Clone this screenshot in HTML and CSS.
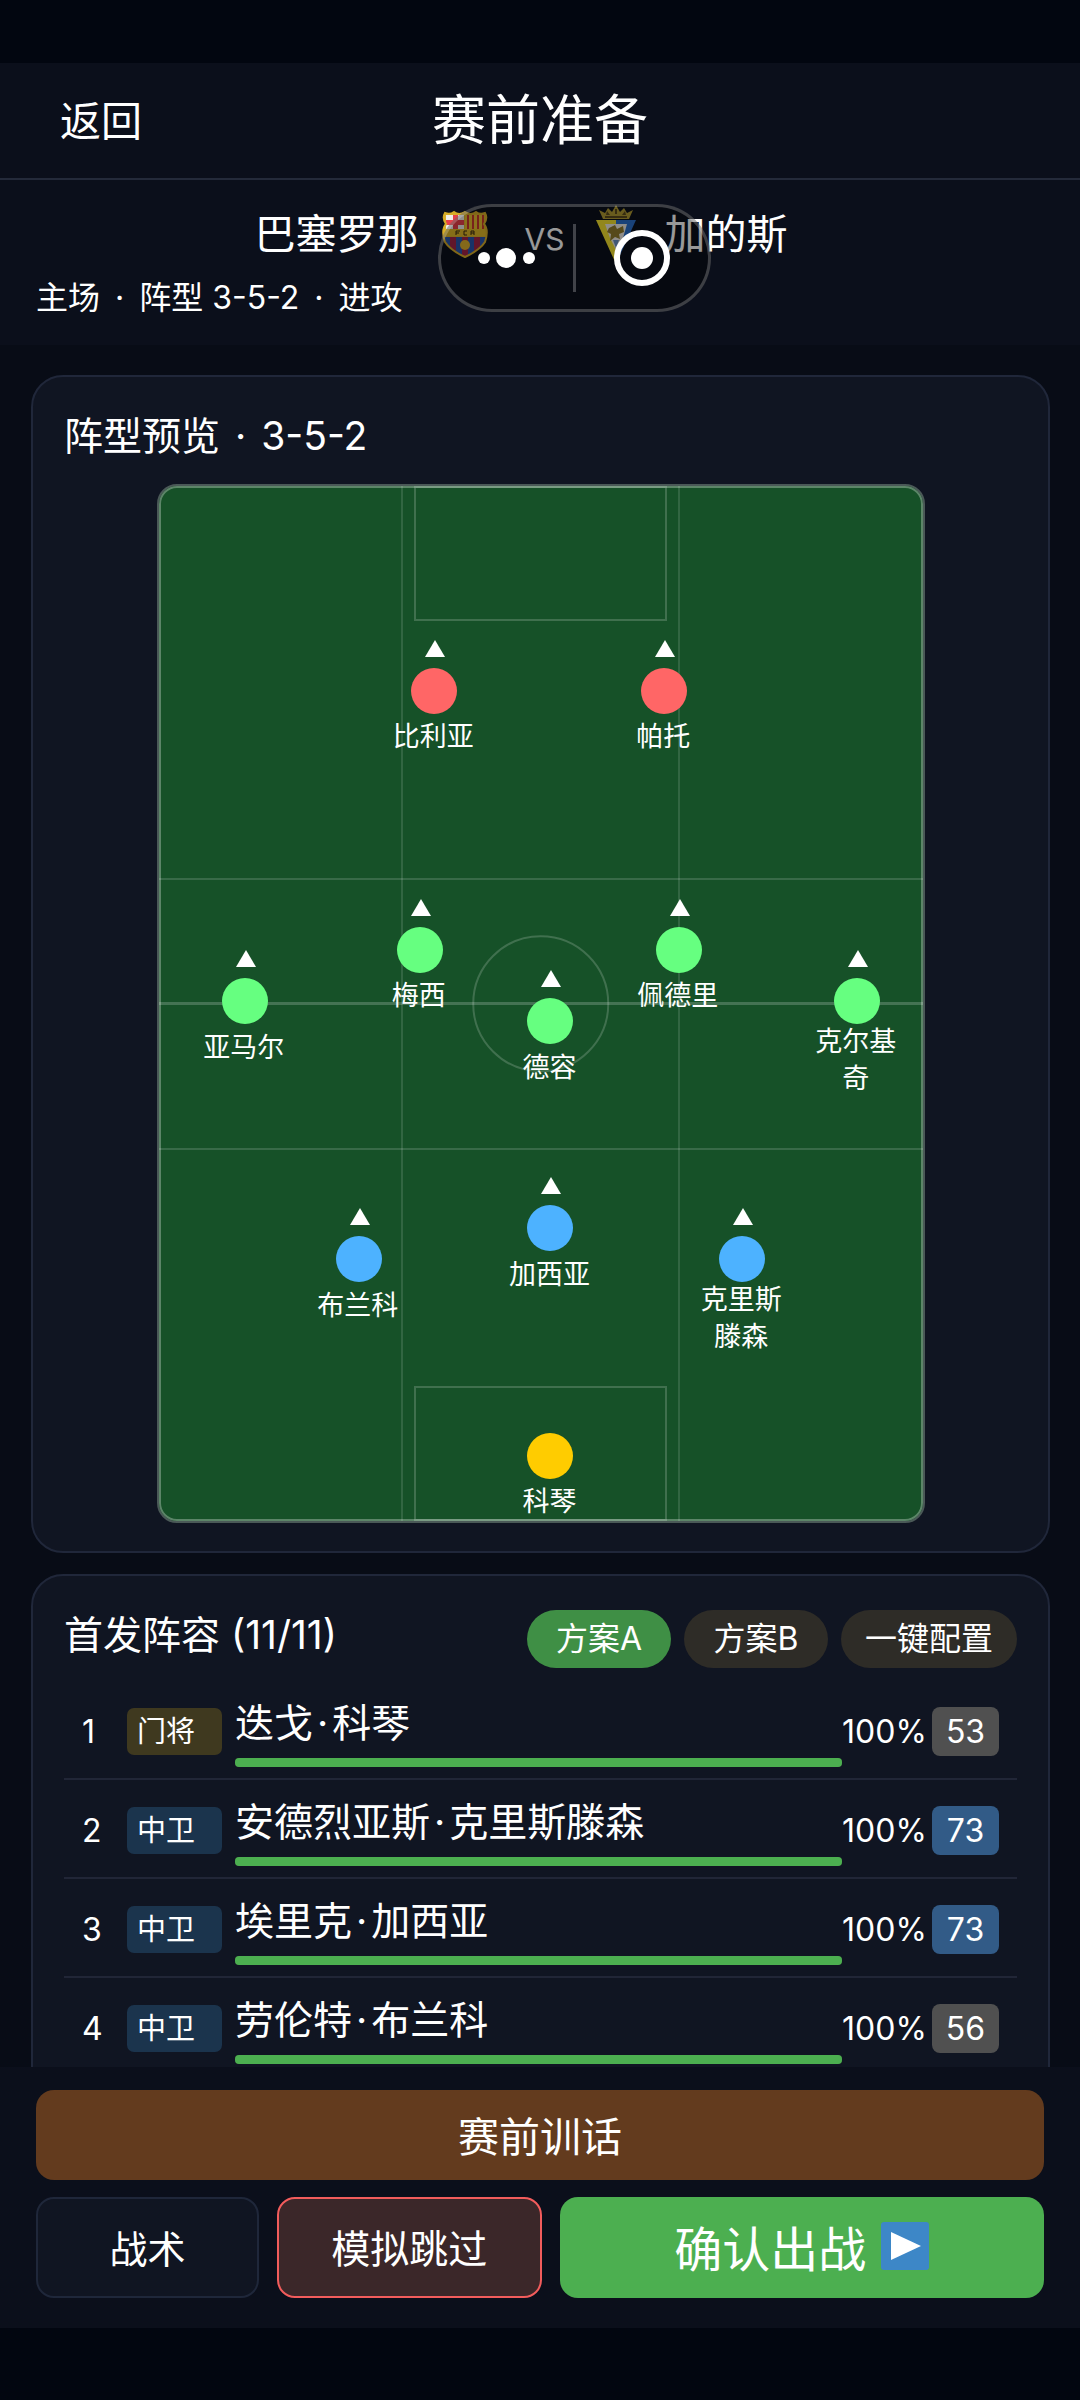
FILE: index.html
```html
<!DOCTYPE html>
<html lang="zh-CN">
<head>
<meta charset="utf-8">
<meta name="viewport" content="width=device-width, initial-scale=1">
<title>赛前准备</title>
<link rel="stylesheet" href="styles.css">
</head>
<body>
<div class="app">
  <header class="topbar">
    <button class="back" type="button">返回</button>
    <h1 class="page-title">赛前准备</h1>
  </header>

  <div class="capsule">
    <button class="capsule-btn" type="button" aria-label="更多">
      <svg width="60" height="24" viewBox="0 0 60 24" fill="#fff"><circle cx="7" cy="12" r="6"/><circle cx="29" cy="12" r="10"/><circle cx="52" cy="12" r="6"/></svg>
    </button>
    <span class="capsule-line"></span>
    <button class="capsule-btn" type="button" aria-label="关闭">
      <svg width="56" height="56" viewBox="0 0 56 56"><circle cx="28" cy="28" r="25" fill="none" stroke="#fff" stroke-width="6"/><circle cx="28" cy="28" r="11" fill="#fff"/></svg>
    </button>
  </div>

  <section class="match">
    <div class="teams">
      <span class="team">巴塞罗那</span>
      <svg class="crest crest-home" width="48" height="48" viewBox="0 0 48 48">
        <defs><clipPath id="shield"><path d="M4 3Q9 5 13 2Q18 6 24 2Q30 6 35 2Q39 5 44 3Q47 8 43 14Q48 20 44 32Q39 40 24 47Q9 40 4 32Q0 20 5 14Q1 8 4 3Z"/></clipPath></defs>
        <g clip-path="url(#shield)">
          <path fill="#d9b02a" d="M0 0h48v48H0z"/>
          <path fill="#f1eee9" d="M5 5h18v14H5z"/>
          <path fill="#e8404a" d="M12 5h5v14h-5zM5 10h18v5H5z"/>
          <path fill="#e8bd30" d="M24 5h19v14H24z"/>
          <path fill="#c8372d" d="M26 5h2v14h-2zM31 5h2v14h-2zM36 5h2v14h-2zM41 5h2v14h-2z"/>
          <path fill="#dfb728" d="M0 19h48v7H0z"/>
          <path fill="#2a55ac" d="M3 27h42v20H3z"/>
          <path fill="#a32549" d="M9 27h6v20H9zM21 27h6v20h-6zM33 27h6v20h-6z"/>
          <circle cx="24" cy="35" r="5" fill="#dbb02c"/>
          <path fill="none" stroke="#3a2b12" stroke-width="1" d="M15 21h4M15 21v4M15 23h3M26 21h-3v4h3M30 25v-4h3v4M30 23h3"/>
        </g>
        <path fill="none" stroke="#d6ac28" stroke-width="2" d="M4 3Q9 5 13 2Q18 6 24 2Q30 6 35 2Q39 5 44 3Q47 8 43 14Q48 20 44 32Q39 40 24 47Q9 40 4 32Q0 20 5 14Q1 8 4 3Z"/>
      </svg>
      <span class="versus">VS</span>
      <svg class="crest crest-away" width="48" height="60" viewBox="0 0 48 60">
        <path fill="#f4e22f" d="M4 16h20v44z"/>
        <path fill="#2a6fca" d="M24 16h20L24 60z"/>
        <path fill="#eeebe4" d="M13 20h22l-4 14-7 12-6-12z"/>
        <path fill="#8f7a2c" d="M17 24l6-3 2 4 6-3 1 6-5 2 1 5-5-2-5 4 1-7-4-2z"/>
        <path fill="#6d91c4" d="M21 36h6l-3 8z"/>
        <path fill="#b09a32" d="M11 15L7 6l6 3 3-5 4 4 4-7 4 7 4-4 3 5 6-3-4 9z"/>
        <path fill="#5b4a1d" d="M13 12h22v2H13zM15 7l3 4h-4zM23 5h2v5h-2zM33 7l1 4h-4z"/>
      </svg>
      <span class="team">加的斯</span>
    </div>
    <p class="match-meta">主场 <span class="sep">·</span> 阵型 3-5-2 <span class="sep">·</span> 进攻</p>
  </section>

  <main class="content">
    <section class="card card-pitch">
      <h2 class="card-title">阵型预览 <span class="dot">·</span> 3-5-2</h2>
      <div class="pitch">
        <span class="line line-v line-left"></span>
        <span class="line line-v line-right"></span>
        <span class="line line-h line-upper"></span>
        <span class="line line-h line-lower"></span>
        <span class="line line-half"></span>
        <span class="center-circle"></span>
        <span class="box box-top"></span>
        <span class="box box-bottom"></span>
        <div class="player forward" style="left:36.1%;top:19.8%"><span class="name">比利亚</span></div>
        <div class="player forward" style="left:66.2%;top:19.8%"><span class="name">帕托</span></div>
        <div class="player midfield" style="left:34.2%;top:44.8%"><span class="name">梅西</span></div>
        <div class="player midfield" style="left:68.1%;top:44.8%"><span class="name">佩德里</span></div>
        <div class="player midfield" style="left:51.3%;top:51.7%"><span class="name">德容</span></div>
        <div class="player midfield" style="left:11.3%;top:49.8%"><span class="name">亚马尔</span></div>
        <div class="player midfield" style="left:91.4%;top:49.8%"><span class="name">克尔基奇</span></div>
        <div class="player defender" style="left:26.2%;top:74.7%"><span class="name">布兰科</span></div>
        <div class="player defender" style="left:51.3%;top:71.7%"><span class="name">加西亚</span></div>
        <div class="player defender" style="left:76.4%;top:74.7%"><span class="name">克里斯滕森</span></div>
        <div class="player keeper" style="left:51.3%;top:93.7%"><span class="name">科琴</span></div>
      </div>
    </section>

    <section class="card">
      <div class="card-head">
        <h2 class="card-title">首发阵容 (11/11)</h2>
        <div class="plans">
          <button class="chip chip-active" type="button">方案A</button>
          <button class="chip" type="button">方案B</button>
          <button class="chip" type="button">一键配置</button>
        </div>
      </div>
      <ol class="lineup">
        <li class="row">
          <span class="num">1</span><span class="tag tag-gk">门将</span>
          <div class="who"><span class="who-name">迭戈<span class="dot">·</span>科琴</span><span class="bar"><span class="bar-fill" style="width:100%"></span></span></div>
          <span class="pct">100%</span><span class="score">53</span>
        </li>
        <li class="row">
          <span class="num">2</span><span class="tag">中卫</span>
          <div class="who"><span class="who-name">安德烈亚斯<span class="dot">·</span>克里斯滕森</span><span class="bar"><span class="bar-fill" style="width:100%"></span></span></div>
          <span class="pct">100%</span><span class="score score-good">73</span>
        </li>
        <li class="row">
          <span class="num">3</span><span class="tag">中卫</span>
          <div class="who"><span class="who-name">埃里克<span class="dot">·</span>加西亚</span><span class="bar"><span class="bar-fill" style="width:100%"></span></span></div>
          <span class="pct">100%</span><span class="score score-good">73</span>
        </li>
        <li class="row">
          <span class="num">4</span><span class="tag">中卫</span>
          <div class="who"><span class="who-name">劳伦特<span class="dot">·</span>布兰科</span><span class="bar"><span class="bar-fill" style="width:100%"></span></span></div>
          <span class="pct">100%</span><span class="score">56</span>
        </li>
      </ol>
    </section>
  </main>

  <footer class="actions">
    <button class="btn btn-talk" type="button">赛前训话</button>
    <div class="action-row">
      <button class="btn btn-tactics" type="button">战术</button>
      <button class="btn btn-skip" type="button">模拟跳过</button>
      <button class="btn btn-confirm" type="button">确认出战
        <svg width="48" height="48" viewBox="0 0 48 48"><rect width="48" height="48" rx="3" fill="#3d87c7"/><path fill="#fff" d="M10 10l30 14-30 14z"/></svg>
      </button>
    </div>
  </footer>
</div>
</body>
</html>
```
FILE: styles.css
```css
* {
  box-sizing: border-box;
}

body {
  margin: 0;
  background: #020610;
  color: #fff;
  font-family: Inter, "Noto Sans CJK SC", sans-serif;
  font-size: 32px;
}

h1,
h2,
p,
ol {
  margin: 0;
  padding: 0;
  font-weight: 400;
}

button {
  margin: 0;
  padding: 0;
  border: 0;
  background: none;
  color: inherit;
  font: inherit;
}

.app {
  position: relative;
  display: flex;
  flex-direction: column;
  height: 100vh;
  padding: 63px 0 72px;
}

.dot {
  margin: 0 4px;
}

.sep {
  margin: 0 6px;
}

/* Header */

.topbar {
  flex: none;
  display: grid;
  grid-template-columns: 1fr auto 1fr;
  align-items: center;
  height: 117px;
  padding: 0 60px;
  border-bottom: 2px solid #242a3a;
  background: #0b0f1b;
}

.back {
  justify-self: start;
  font-size: 41px;
  line-height: 60px;
}

.page-title {
  font-size: 54px;
  line-height: 80px;
}

.capsule {
  position: absolute;
  z-index: 2;
  top: 204px;
  left: 438px;
  display: flex;
  align-items: center;
  width: 273px;
  height: 108px;
  border: 3px solid rgba(255, 255, 255, 0.22);
  border-radius: 54px;
  background: rgba(0, 0, 0, 0.4);
}

.capsule-btn {
  flex: 1;
  display: flex;
  align-items: center;
  justify-content: center;
}

.capsule-line {
  width: 3px;
  height: 68px;
  background: rgba(255, 255, 255, 0.24);
}

/* Match summary */

.match {
  flex: none;
  padding: 30px 36px 29px;
  background: #0b0f1b;
}

.teams {
  display: flex;
  align-items: center;
  justify-content: center;
  height: 48px;
  padding-right: 38px;
}

.team {
  font-size: 41px;
  line-height: 48px;
}

.crest-home {
  margin: 0 36px 0 22px;
}

.crest-away {
  margin: 0 24px 0 28px;
}

.versus {
  align-self: flex-end;
  font-size: 30px;
  line-height: 38px;
}

.match-meta {
  margin-top: 22px;
  font-size: 32px;
  line-height: 36px;
}

/* Scroll area */

.content {
  flex: 1;
  display: flex;
  flex-direction: column;
  gap: 21px;
  min-height: 0;
  padding: 30px 30px 30px 31px;
  overflow-y: auto;
  scrollbar-width: none;
  background: #080c16;
}

.card {
  flex: none;
  padding: 34px 31px 28px;
  border: 2px solid #20273a;
  border-radius: 32px;
  background: #101522;
}

.card-title {
  font-size: 39px;
  line-height: 50px;
}

/* Pitch */

.pitch {
  position: relative;
  width: 100%;
  max-width: 768px;
  aspect-ratio: 768 / 1039;
  margin: 23px auto 0;
  border: 2px solid #4a5957;
  border-radius: 20px;
  background: #165128;
  box-shadow: inset 0 0 0 2px rgba(255, 255, 255, 0.3);
}

.line {
  position: absolute;
}

.line-v {
  top: 0;
  bottom: 0;
  width: 2px;
  background: rgba(255, 255, 255, 0.12);
}

.line-left {
  left: 31.8%;
}

.line-right {
  right: 31.8%;
}

.line-h {
  left: 0;
  right: 0;
  height: 2px;
  background: rgba(255, 255, 255, 0.15);
}

.line-upper {
  top: 37.9%;
}

.line-lower {
  top: 64%;
}

.line-half {
  left: 0;
  right: 0;
  top: calc(50% - 2px);
  height: 3px;
  background: rgba(255, 255, 255, 0.2);
}

.center-circle {
  position: absolute;
  top: 50%;
  left: 50%;
  width: 18%;
  aspect-ratio: 1;
  border: 2px solid rgba(255, 255, 255, 0.18);
  border-radius: 50%;
  transform: translate(-50%, -50%);
}

.box {
  position: absolute;
  left: 0;
  right: 0;
  width: 33%;
  height: 13%;
  margin: 0 auto;
  border: 2px solid rgba(255, 255, 255, 0.18);
}

.box-top {
  top: 0;
}

.box-bottom {
  bottom: 0;
}

.player {
  position: absolute;
  width: 46px;
  height: 46px;
  margin: -23px 0 0 -23px;
  border-radius: 50%;
}

.player::before {
  content: "";
  position: absolute;
  top: -28px;
  left: 14px;
  border: solid transparent;
  border-width: 0 10px 17px;
  border-bottom-color: #fff;
}

.keeper::before {
  display: none;
}

.forward {
  background: #ff6666;
}

.midfield {
  background: #66ff80;
}

.defender {
  background: #4db2ff;
}

.keeper {
  background: #ffcc00;
}

.name {
  position: absolute;
  top: 45px;
  left: -20px;
  display: flex;
  align-items: center;
  justify-content: center;
  width: 84px;
  min-height: 48px;
  font-size: 27px;
  line-height: 37px;
  text-align: center;
}

/* Lineup */

.card-head {
  display: flex;
  align-items: flex-start;
  justify-content: space-between;
  margin-bottom: 13px;
}

.plans {
  display: flex;
  gap: 13px;
}

.chip {
  min-width: 144px;
  height: 58px;
  padding: 0 24px;
  border-radius: 29px;
  background: #2e2c27;
  font-size: 32px;
  line-height: 58px;
}

.chip-active {
  background: #3f8f45;
}

.lineup {
  list-style: none;
}

.row {
  display: grid;
  grid-template-columns: 45px 95px 1fr 90px 67px;
  align-items: center;
  padding: 15px 18px 11px;
  border-bottom: 2px solid #212637;
}

.num,
.pct,
.score {
  font-size: 32px;
  line-height: 49px;
}

.tag {
  padding-left: 10px;
  border-radius: 7px;
  background: #1b344d;
  font-size: 29px;
  line-height: 47px;
}

.tag-gk {
  background: #3f391f;
}

.who {
  padding-left: 13px;
}

.who-name {
  display: block;
  font-size: 39px;
  line-height: 54px;
}

.bar {
  display: block;
  height: 9px;
  margin-top: 8px;
  border-radius: 4px;
  background: #263026;
}

.bar-fill {
  display: block;
  height: 100%;
  border-radius: inherit;
  background: #4caf50;
}

.score {
  border-radius: 8px;
  background: #505050;
  text-align: center;
}

.score-good {
  background: #325b87;
}

/* Bottom actions */

.actions {
  flex: none;
  padding: 23px 36px 30px;
  background: #0b0f1b;
}

.btn {
  display: flex;
  align-items: center;
  justify-content: center;
  padding-bottom: 3px;
  border-radius: 18px;
}

.btn-talk {
  width: 100%;
  height: 90px;
  background: #633b1e;
  font-size: 41px;
}

.action-row {
  display: grid;
  grid-template-columns: 223fr 264fr 484fr;
  gap: 18px;
  height: 101px;
  margin-top: 17px;
}

.btn-tactics {
  border: 2px solid #1f273a;
  background: #101522;
  font-size: 38px;
}

.btn-skip {
  border: 2px solid #f25c5c;
  background: #3b2729;
  font-size: 39px;
}

.btn-confirm {
  gap: 15px;
  background: #4caf50;
  font-size: 48px;
}
```
